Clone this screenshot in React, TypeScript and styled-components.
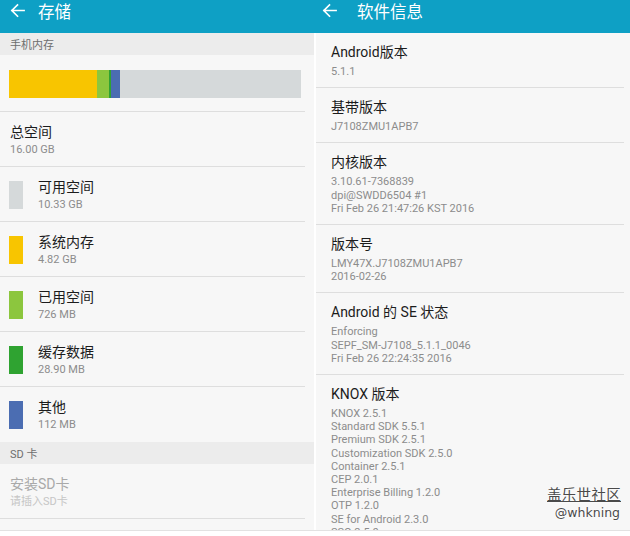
import styled, { createGlobalStyle } from "styled-components";

const GlobalStyle = createGlobalStyle`
  html, body {
    margin: 0;
    padding: 0;
    background: #ffffff;
  }
  body {
    font-family: Roboto, "Noto Sans CJK SC", sans-serif;
    -webkit-font-smoothing: antialiased;
  }
`;

const TEAL = "#0ea0c5";

const Screen = styled.div`
  position: relative;
  width: 630px;
  height: 536px;
  overflow: hidden;
  display: grid;
  grid-template-columns: 314px 316px;
  align-items: start;
  background: #ffffff;
`;

const Panel = styled.div`
  height: 531px;
  display: flex;
  flex-direction: column;
  overflow: hidden;
  background: #f7f7f7;
  border-bottom: 1px solid #e2e2e2;
  box-sizing: border-box;
`;

const Header = styled.div<{ $pad: number }>`
  height: 33px;
  flex-shrink: 0;
  background: ${TEAL};
  display: flex;
  align-items: flex-start;
  padding: 1px 0 0 ${({ $pad }) => $pad}px;
  box-sizing: border-box;
  color: #ffffff;
`;

const BackArrow = styled.svg`
  width: 15px;
  height: 15px;
  margin-top: 2px;
  flex-shrink: 0;
`;

const HeaderTitle = styled.div<{ $gap: number }>`
  margin-left: ${({ $gap }) => $gap}px;
  font-family: "Noto Sans CJK SC", sans-serif;
  font-size: 16.5px;
  line-height: 20px;
  font-weight: 400;
`;

const Body = styled.div<{ $split?: boolean }>`
  flex: 1;
  min-height: 0;
  display: flex;
  flex-direction: column;
  border-left: ${({ $split }) => ($split ? "2px solid #ffffff" : "none")};
`;

const SectionBand = styled.div`
  height: 22px;
  flex-shrink: 0;
  background: #ececec;
  padding-left: 10px;
  display: flex;
  align-items: center;
  font-family: Roboto, "Noto Sans CJK SC", sans-serif;
  font-size: 11px;
  color: #6e6e6e;
`;

const BarBlock = styled.div`
  padding: 15px 4px 13px 9px;
  margin-right: 9px;
  border-bottom: 1px solid #dedede;
  flex-shrink: 0;
`;

const Bar = styled.div`
  display: flex;
  height: 28px;
  background: #d5d9da;
`;

const BarPart = styled.div<{ $color: string }>`
  height: 100%;
  background: ${({ $color }) => $color};
`;

const Row = styled.div<{ $last?: boolean; $inset: number }>`
  display: flex;
  align-items: center;
  gap: 15px;
  padding: 11px 0 9px ${({ $inset }) => $inset}px;
  margin-right: 9px;
  border-bottom: 1px solid ${({ $last }) => ($last ? "transparent" : "#dedede")};
  flex-shrink: 0;
`;

const Swatch = styled.div<{ $color: string }>`
  width: 14px;
  height: 28px;
  background: ${({ $color }) => $color};
  flex-shrink: 0;
`;

const TextCol = styled.div`
  display: flex;
  flex-direction: column;
  min-width: 0;
`;

const Title = styled.div<{ $dim?: boolean }>`
  font-family: Roboto, "Noto Sans CJK SC", sans-serif;
  font-size: 14px;
  line-height: 18px;
  color: ${({ $dim }) => ($dim ? "#a9a9a9" : "#1c1c1c")};
  white-space: nowrap;
`;

const Sub = styled.div<{ $dim?: boolean }>`
  font-family: Roboto, "Noto Sans CJK SC", sans-serif;
  font-size: 11px;
  line-height: 14px;
  margin-top: 2px;
  color: ${({ $dim }) => ($dim ? "#c6c6c6" : "#8c8c8c")};
  white-space: nowrap;
`;

const InfoRow = styled.div`
  padding: 10px 0 9px 15px;
  margin-right: 6px;
  border-bottom: 1px solid #dedede;
  flex-shrink: 0;
`;

const InfoLines = styled.div`
  margin-top: 4px;
  font-family: Roboto, "Noto Sans CJK SC", sans-serif;
  font-size: 11px;
  line-height: 13.2px;
  color: #8c8c8c;
  white-space: nowrap;
`;

const Watermark = styled.div`
  position: absolute;
  right: 9px;
  top: 485px;
  display: flex;
  flex-direction: column;
  align-items: flex-end;
  color: #4a4a4a;
  text-shadow: 0 0 2px #ffffff, 0 0 2px #ffffff;
`;

const WatermarkName = styled.div`
  font-family: "Noto Sans CJK SC", sans-serif;
  font-size: 14.5px;
  line-height: 17px;
  letter-spacing: 0.3px;
  text-decoration: underline;
  text-decoration-thickness: 1px;
  text-underline-offset: 1px;
`;

const WatermarkUser = styled.div`
  margin-top: 3px;
  font-family: "DejaVu Sans", sans-serif;
  font-size: 12.5px;
  line-height: 15px;
  margin-right: 1px;
`;

const Arrow = () => (
  <BackArrow viewBox="0 0 16 16" fill="none" stroke="#ffffff" strokeWidth="1.8" strokeLinecap="square">
    <path d="M2 8h13M8 2L2 8l6 6" />
  </BackArrow>
);

const barParts = [
  { color: "#f8c500", width: 88 },
  { color: "#8cc63e", width: 12 },
  { color: "#2fa331", width: 2 },
  { color: "#4b6db2", width: 9 },
];

const storageRows = [
  { color: "#d5d9da", title: "可用空间", sub: "10.33 GB" },
  { color: "#f8c500", title: "系统内存", sub: "4.82 GB" },
  { color: "#8cc63e", title: "已用空间", sub: "726 MB" },
  { color: "#2fa331", title: "缓存数据", sub: "28.90 MB" },
  { color: "#4b6db2", title: "其他", sub: "112 MB" },
];

const infoRows = [
  { title: "Android版本", lines: ["5.1.1"] },
  { title: "基带版本", lines: ["J7108ZMU1APB7"] },
  { title: "内核版本", lines: ["3.10.61-7368839", "dpi@SWDD6504 #1", "Fri Feb 26 21:47:26 KST 2016"] },
  { title: "版本号", lines: ["LMY47X.J7108ZMU1APB7", "2016-02-26"] },
  { title: "Android 的 SE 状态", lines: ["Enforcing", "SEPF_SM-J7108_5.1.1_0046", "Fri Feb 26 22:24:35 2016"] },
  {
    title: "KNOX 版本",
    lines: [
      "KNOX 2.5.1",
      "Standard SDK 5.5.1",
      "Premium SDK 2.5.1",
      "Customization SDK 2.5.0",
      "Container 2.5.1",
      "CEP 2.0.1",
      "Enterprise Billing 1.2.0",
      "OTP 1.2.0",
      "SE for Android 2.3.0",
      "SSO 2.5.0",
      "TIMA 3.0",
    ],
  },
];

export default function App() {
  return (
    <>
      <GlobalStyle />
      <Screen>
        <Panel>
          <Header $pad={10}>
            <Arrow />
            <HeaderTitle $gap={13}>存储</HeaderTitle>
          </Header>
          <Body>
            <SectionBand>手机内存</SectionBand>
            <BarBlock>
              <Bar>
                {barParts.map((p) => (
                  <BarPart key={p.color} $color={p.color} style={{ width: p.width }} />
                ))}
              </Bar>
            </BarBlock>
            <Row $inset={10}>
              <TextCol>
                <Title>总空间</Title>
                <Sub>16.00 GB</Sub>
              </TextCol>
            </Row>
            {storageRows.map((r, i) => (
              <Row key={r.title} $inset={9} $last={i === storageRows.length - 1}>
                <Swatch $color={r.color} />
                <TextCol>
                  <Title>{r.title}</Title>
                  <Sub>{r.sub}</Sub>
                </TextCol>
              </Row>
            ))}
            <SectionBand>SD 卡</SectionBand>
            <Row $inset={10}>
              <TextCol>
                <Title $dim>安装SD卡</Title>
                <Sub $dim>请插入SD卡</Sub>
              </TextCol>
            </Row>
          </Body>
        </Panel>

        <Panel>
          <Header $pad={8}>
            <Arrow />
            <HeaderTitle $gap={20}>软件信息</HeaderTitle>
          </Header>
          <Body $split>
            {infoRows.map((r) => (
              <InfoRow key={r.title}>
                <Title>{r.title}</Title>
                <InfoLines>
                  {r.lines.map((l) => (
                    <div key={l}>{l}</div>
                  ))}
                </InfoLines>
              </InfoRow>
            ))}
          </Body>
        </Panel>

        <Watermark>
          <WatermarkName>盖乐世社区</WatermarkName>
          <WatermarkUser>@whkning</WatermarkUser>
        </Watermark>
      </Screen>
    </>
  );
}
